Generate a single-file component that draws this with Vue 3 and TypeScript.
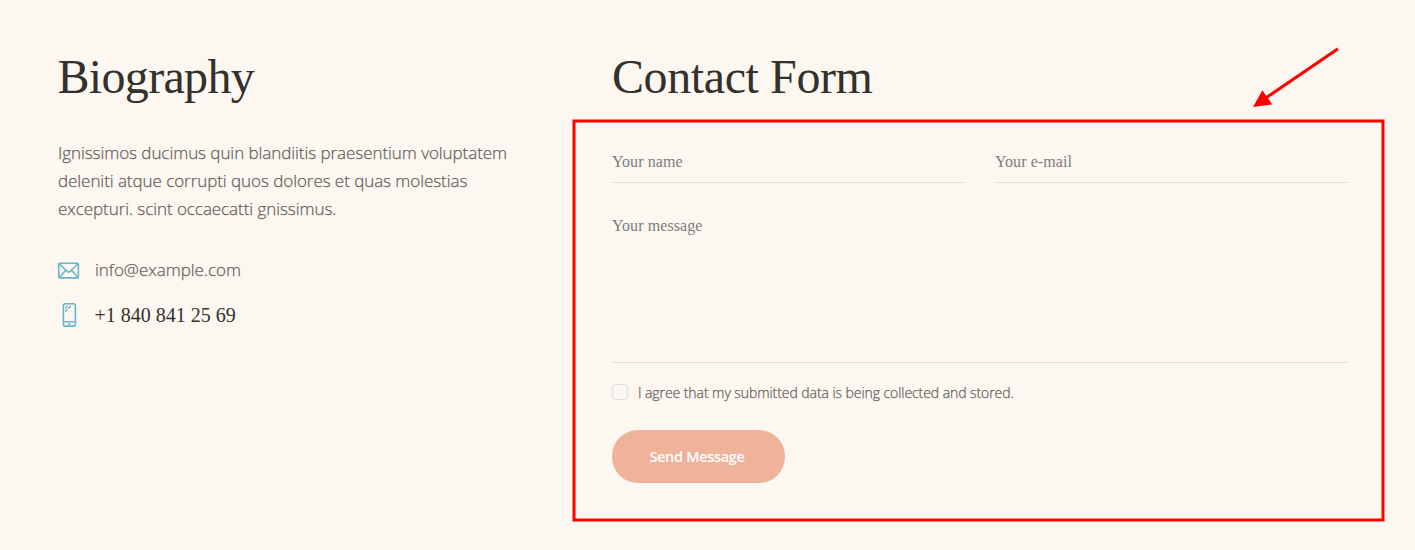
<script setup lang="ts">
const biography: string[] = [
  'Ignissimos ducimus quin blandiitis praesentium voluptatem',
  'deleniti atque corrupti quos dolores et quas molestias',
  'excepturi. scint occaecatti gnissimus.',
]
</script>

<template>
  <main class="page">
    <section class="bio">
      <h2 class="title title-bio">Biography</h2>
      <p class="text">
        <span v-for="(line, i) in biography" :key="i" class="line">{{ line }}</span>
      </p>
      <div class="contact">
        <svg class="icon" width="22" height="18" viewBox="0 0 22 18">
          <rect x="0.8" y="2.3" width="19.6" height="14.6" rx="0.8" />
          <path d="M1.5 3 L9.3 10.5 Q10.6 11.7 11.9 10.5 L19.8 3 M1.5 16.2 L7.6 9.5 M19.8 16.2 L13.7 9.5" />
        </svg>
        <span class="mail">info@example.com</span>
      </div>
      <div class="contact">
        <svg class="icon" width="22" height="24" viewBox="0 0 22 24">
          <rect x="5.4" y="0.8" width="12" height="22.3" rx="1.8" />
          <path d="M5.4 18.7 H17.4 M10.4 20.9 H12.4" />
          <path class="thin" d="M7.3 5.4 L9.9 2.8 M7.3 8.6 L13.1 2.8" />
        </svg>
        <span class="phone">+1 840 841 25 69</span>
      </div>
    </section>

    <section class="form-area">
      <h2 class="title title-form">Contact Form</h2>
      <form class="form" @submit.prevent>
        <div class="row">
          <input class="field" type="text" placeholder="Your name" />
          <input class="field" type="email" placeholder="Your e-mail" />
        </div>
        <textarea class="field message" placeholder="Your message"></textarea>
        <label class="agree">
          <input class="check" type="checkbox" />
          <span class="agree-text">I agree that my submitted data is being collected and stored.</span>
        </label>
        <button class="send" type="submit"><span>Send Message</span></button>
      </form>
    </section>

    <svg class="annotation" width="1415" height="550" viewBox="0 0 1415 550">
      <rect x="574" y="121" width="809" height="399" />
      <path d="M1338 48.8 L1265 98.5" />
      <polygon points="1253,107 1262.4,90.3 1272.2,104.4" />
    </svg>
  </main>
</template>

<style>
body {
  background: #fcf7f1;
}
</style>

<style scoped>
.page {
  position: relative;
  box-sizing: border-box;
  width: 1415px;
  height: 550px;
  padding: 49px 67px 0 58px;
  display: grid;
  grid-template-columns: 554px 736px;
  overflow: hidden;
  background: #fcf7f1;
  color: #67625c;
  font-family: "Open Sans", "Noto Sans", sans-serif;
}
.title {
  margin: 0;
  height: 56px;
  font: 400 48px/56px "Liberation Serif", serif;
  color: #34302b;
  white-space: nowrap;
}
.title-bio {
  margin-left: -0.5px;
  letter-spacing: -0.68px;
}
.title-form {
  letter-spacing: -0.4px;
}
.text {
  margin: 34px 0 0;
  font-size: 17px;
  font-weight: 300;
  line-height: 28px;
}
.text,
.mail,
.agree-text {
  -webkit-text-stroke: 0.25px currentColor;
}
.line {
  display: block;
  white-space: nowrap;
  letter-spacing: -0.06px;
}
.contact {
  display: flex;
  align-items: center;
  gap: 15px;
  height: 45px;
}
.text + .contact {
  margin-top: 24px;
}
.icon {
  fill: none;
  stroke: #68b6cb;
  stroke-width: 1.6;
  stroke-linejoin: round;
}
.icon .thin {
  stroke-width: 1.4;
  stroke-dasharray: 3.4 1;
}
.mail {
  font-size: 17px;
  font-weight: 300;
  letter-spacing: -0.02px;
}
.phone {
  margin-left: -0.5px;
  font: 20px/24px "Liberation Serif", serif;
  color: #34302b;
}
.form {
  display: flex;
  flex-direction: column;
  align-items: flex-start;
  padding-top: 36px;
}
.row {
  display: grid;
  grid-template-columns: 353px 353px;
  gap: 30px;
}
.field {
  display: block;
  box-sizing: border-box;
  width: 100%;
  height: 42px;
  margin: 0;
  padding: 1px 0 0;
  border: 0;
  border-bottom: 1px solid #e0dedb;
  border-radius: 0;
  outline: 0;
  background: transparent;
  font: 16px/20px "Liberation Serif", serif;
  letter-spacing: 0.08px;
  color: #34302b;
  resize: none;
}
.field::placeholder {
  color: #7d7d7b;
  opacity: 1;
}
.message {
  height: 148px;
  margin-top: 32px;
}
.agree {
  display: flex;
  align-items: center;
  gap: 10px;
  height: 20px;
  margin-top: 19px;
}
.check {
  appearance: none;
  box-sizing: border-box;
  width: 16px;
  height: 16px;
  margin: 0;
  border: 1px solid #e0e0df;
  border-radius: 4px;
}
.agree-text {
  padding-top: 1px;
  font-size: 14px;
  font-weight: 300;
  letter-spacing: -0.07px;
  white-space: nowrap;
}
.send {
  width: 173px;
  height: 53px;
  margin-top: 28px;
  padding: 1px 3px 0 0;
  border: 0;
  border-radius: 26px;
  background: #efb39b;
  color: #fff;
  font: 600 14.5px/20px "Open Sans", "Noto Sans", sans-serif;
  letter-spacing: -0.32px;
}
.annotation {
  position: absolute;
  inset: 0;
  pointer-events: none;
  fill: none;
  stroke: #ff0000;
  stroke-width: 3;
}
.annotation polygon {
  fill: #ff0000;
  stroke: none;
}
</style>
